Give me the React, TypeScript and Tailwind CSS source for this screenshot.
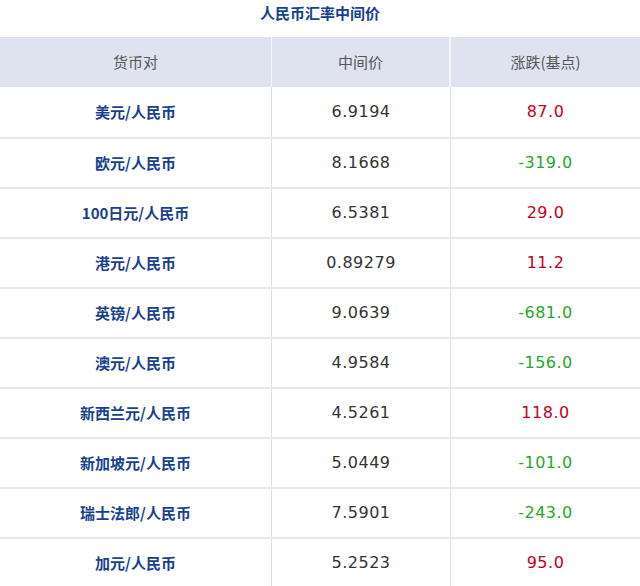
const rows: [string, string, string][] = [
  ["美元/人民币", "6.9194", "87.0"],
  ["欧元/人民币", "8.1668", "-319.0"],
  ["100日元/人民币", "6.5381", "29.0"],
  ["港元/人民币", "0.89279", "11.2"],
  ["英镑/人民币", "9.0639", "-681.0"],
  ["澳元/人民币", "4.9584", "-156.0"],
  ["新西兰元/人民币", "4.5261", "118.0"],
  ["新加坡元/人民币", "5.0449", "-101.0"],
  ["瑞士法郎/人民币", "7.5901", "-243.0"],
  ["加元/人民币", "5.2523", "95.0"],
];

export default function App() {
  return (
    <div className="w-[640px] h-[586px] bg-white overflow-hidden" style={{ fontFamily: '"Noto Sans CJK SC", sans-serif' }}>
      <div className="h-[37px] flex items-start justify-center pt-[2px] text-[15px] font-bold text-[#1a3f8f]">人民币汇率中间价</div>
      <div className="grid grid-cols-[272px_179px_189px] h-[50px] bg-[#dfe3f0] text-[15px] text-[#555]">
        <div className="flex items-center justify-center border-r border-[#f4f5fa]">货币对</div>
        <div className="flex items-center justify-center border-r-2 border-[#f4f5fa]">中间价</div>
        <div className="flex items-center justify-center">涨跌(基点)</div>
      </div>
      {rows.map(([n, p, c], i) => (
        <div key={i} className={`grid grid-cols-[272px_179px_189px] h-[50px] ${i > 0 ? "border-t-2 border-[#e8e8e8]" : ""}`}>
          <div className="flex items-center justify-center border-r border-[#e0e0e0] text-[15px] font-bold text-[#1a3f8f]">{n}</div>
          <div className="flex items-center justify-center border-r border-[#e0e0e0] text-[16px] text-[#333] tracking-[0.5px]" style={{ fontFamily: '"DejaVu Sans", sans-serif' }}>{p}</div>
          <div className={`flex items-center justify-center text-[16px] tracking-[0.5px] ${c.startsWith("-") ? "text-[#1eaa2a]" : "text-[#c4001a]"}`} style={{ fontFamily: '"DejaVu Sans", sans-serif' }}>{c}</div>
        </div>
      ))}
    </div>
  );
}
